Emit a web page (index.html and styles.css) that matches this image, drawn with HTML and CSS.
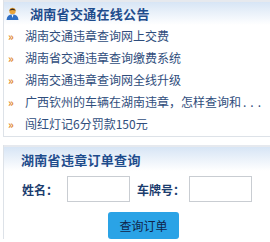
FILE: index.html
```html
<!DOCTYPE html>
<html lang="zh-CN">
<head>
  <meta charset="UTF-8" />
  <title>湖南省交通在线公告</title>
  <link rel="stylesheet" href="styles.css">
</head>
<body>
  <div class="panel notice">
    <div class="panel-head">
      <svg class="head-icon" width="13" height="13" viewBox="0 0 13 13">
        <circle cx="6.5" cy="4" r="3.2" fill="#e9a43a"/>
        <path d="M3.2 3.6 Q6.5 -0.6 9.8 3.6 Q6.5 2.2 3.2 3.6 Z" fill="#3b2a1a"/>
        <path d="M0.5 13 Q1 7.6 6.5 7.6 Q12 7.6 12.5 13 Z" fill="#2f6fc4"/>
        <path d="M5.6 7.8 L6.5 11 L7.4 7.8 Z" fill="#ffffff"/>
      </svg>
      <h2>湖南省交通在线公告</h2>
    </div>
    <ul class="news">
      <li><span class="arrow">&raquo;</span>湖南交通违章查询网上交费</li>
      <li><span class="arrow">&raquo;</span>湖南省交通违章查询缴费系统</li>
      <li><span class="arrow">&raquo;</span>湖南交通违章查询网全线升级</li>
      <li><span class="arrow">&raquo;</span>广西钦州的车辆在湖南违章，怎样查询和<span class="dots">...</span></li>
      <li><span class="arrow">&raquo;</span>闯红灯记6分罚款150元</li>
    </ul>
  </div>

  <div class="panel query">
    <div class="panel-head">
      <h2>湖南省违章订单查询</h2>
    </div>
    <form class="query-form">
      <div class="row">
        <label>姓名：</label>
        <input type="text" class="field">
        <label class="plate">车牌号：</label>
        <input type="text" class="field">
      </div>
      <div class="actions">
        <button type="button">查询订单</button>
      </div>
    </form>
  </div>
</body>
</html>
```

FILE: styles.css
```css
* {
  box-sizing: border-box;
}

body {
  margin: 0;
  background: #ffffff;
  font-family: "Noto Sans CJK SC", "DejaVu Sans", sans-serif;
  font-size: 12px;
  color: #2f4d7c;
  width: 270px;
  height: 242px;
  overflow: hidden;
}

.panel {
  margin-left: 3px;
  border-left: 1px solid #dde2e8;
}

.panel-head {
  display: flex;
  align-items: center;
  height: 25px;
  border-top: 2px solid #e6e9ee;
  background: linear-gradient(#d7e5f5, #ffffff);
}

.panel-head h2 {
  margin: 0;
  font-size: 13px;
  font-weight: bold;
  color: #1e4c8c;
  letter-spacing: 0.3px;
}

.notice .panel-head {
  padding-left: 2px;
}

.head-icon {
  margin-right: 11px;
}

.news {
  list-style: none;
  margin: 0;
  padding: 0 0 1px 4px;
  border-bottom: 1px solid #dde2e8;
}

.news li {
  height: 22px;
  line-height: 22px;
  white-space: nowrap;
  overflow: hidden;
}

.arrow {
  display: inline-block;
  width: 17px;
  color: #e0892c;
  font-size: 11px;
  font-weight: bold;
}

.dots {
  margin-left: 2px;
  letter-spacing: 4px;
}

.query {
  margin-top: 8px;
}

.query .panel-head {
  padding-left: 17px;
  height: 26px;
}

.query-form {
  padding-top: 5px;
}

.row {
  display: flex;
  align-items: center;
  padding-left: 18px;
}

.row label {
  font-weight: bold;
  color: #1c3d6e;
  width: 45px;
}

.row label.plate {
  width: 52px;
  margin-left: 7px;
}

.field {
  width: 63px;
  height: 26px;
  border: 1px solid #c9cdd2;
  background: #ffffff;
}

.actions {
  padding-left: 104px;
  margin-top: 10px;
}

.actions button {
  width: 71px;
  height: 27px;
  border: none;
  border-radius: 3px;
  background: #2aa3e6;
  color: #10244a;
  font-family: inherit;
  font-size: 12px;
  cursor: pointer;
}
```
